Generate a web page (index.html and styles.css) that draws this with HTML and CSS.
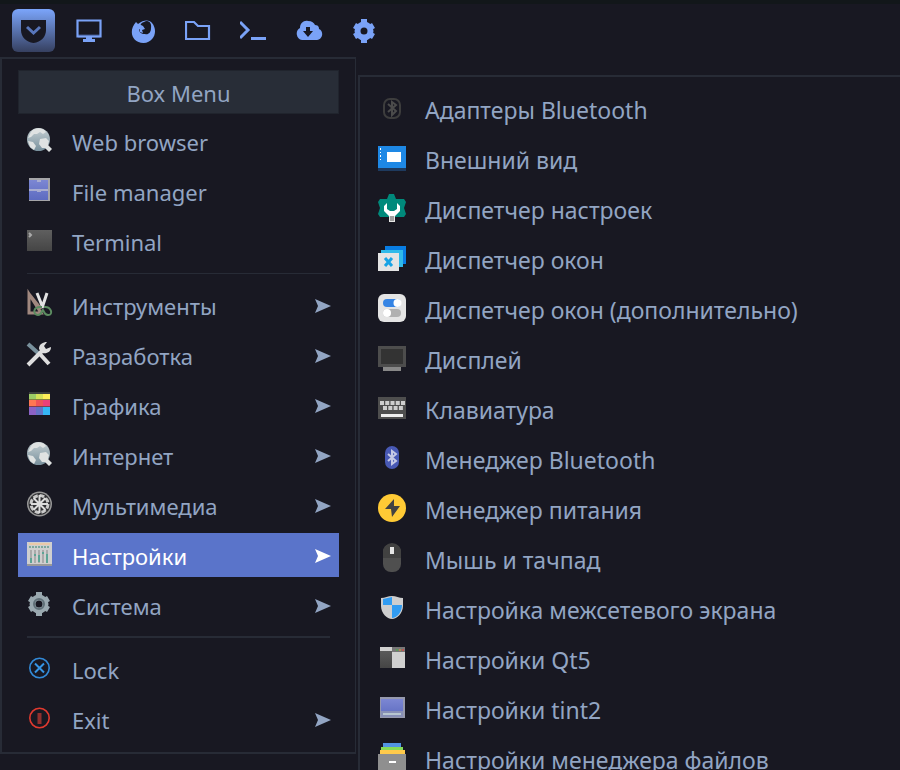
FILE: index.html
```html
<!DOCTYPE html>
<html lang="ru">
<head>
<meta charset="utf-8">
<title>Box Menu</title>
<link rel="stylesheet" href="styles.css">
</head>
<body>
<svg class="defs" aria-hidden="true">
  <defs>
    <linearGradient id="launch" x1="0" y1="0" x2="0" y2="1"><stop offset="0" stop-color="#7ba5fb"/><stop offset="1" stop-color="#364060"/></linearGradient>
    <linearGradient id="dark" x1="0" y1="0" x2="0" y2="1"><stop offset="0" stop-color="#5f5f5f"/><stop offset="1" stop-color="#454545"/></linearGradient>
    <linearGradient id="violet" x1="0" y1="0" x2="0" y2="1"><stop offset="0" stop-color="#7c87d3"/><stop offset="1" stop-color="#5d6bc0"/></linearGradient>
    <linearGradient id="globe" x1="0" y1="0" x2="0" y2="1"><stop offset="0" stop-color="#c5cfd3"/><stop offset="1" stop-color="#78909c"/></linearGradient>
    <symbol id="arrow" viewBox="0 0 16 14"><path d="M0 0 16 7 0 14 3 7Z" fill="currentColor"/></symbol>
    <symbol id="i-globe" viewBox="0 0 28 28">
      <circle cx="13.500" cy="13.500" r="11.500" fill="url(#globe)"/>
      <path d="M6 6C9 1 18 1 21 6L18 8 15 6 12 8 9 8 6 11 3 12ZM3 15 8 16 11 20 9 24 5 21ZM15 13 21 12 24 15 23 19 27 23 24 26 20 22 17 22 14 18Z" fill="#dfe2e2"/>
    </symbol>
    <symbol id="i-gear" viewBox="0 0 28 28">
      <circle cx="14" cy="14" r="6.500" fill="none" stroke="currentColor" stroke-width="6"/>
      <path d="M14 7V2M14 21v5M8 10.500 4.500 8.500M20 17.500l3.500 2M8 17.500l-3.500 2M20 10.500l3.500-2" fill="none" stroke="currentColor" stroke-width="6"/>
    </symbol>
  </defs>
</svg>
<div class="desktop">
  <nav class="panel" aria-label="Панель">
    <button class="launcher" type="button" aria-label="Box Menu"><svg viewBox="0 0 43 43"><rect width="43" height="43" rx="6" fill="url(#launch)"/><path d="M9 11h25v10c0 7-5 12-12.500 13C14 33 9 28 9 21Z" fill="#181822"/><path d="M15 18l6.500 6 6.500-6" fill="none" stroke="#5876bb" stroke-width="3"/></svg></button>
    <button class="tool" type="button" aria-label="Desktop"><svg viewBox="0 0 28 28"><path d="M3 19h22" stroke="#3f5384" stroke-width="3"/><path d="M2.500 3.500h23v16h-23Z" fill="none" stroke="currentColor" stroke-width="2.200"/><path d="M11 20h6v2h3v3H8v-3h3Z" fill="currentColor"/></svg></button>
    <button class="tool" type="button" aria-label="Browser"><svg viewBox="0 0 28 28"><path d="M6 5 8 7C14 2 20 3 22 6 28 13 25 25 13.500 26 2 26-2 14 6 5Z" fill="currentColor"/><path d="M14 5c5-3 8 2 7 6 0 5-3 7-6 6-4 0-6-2-6-5l3 1c-3-3-2-7 2-8Z" fill="#181822"/><path d="M9 7l4 2 2 3-3 1 1 3-3-1Z" fill="currentColor"/></svg></button>
    <button class="tool" type="button" aria-label="Files"><svg viewBox="0 0 28 28"><path d="M1 5h8l4 4h11v13H1Z" fill="none" stroke="currentColor" stroke-width="2.200"/></svg></button>
    <button class="tool" type="button" aria-label="Terminal"><svg viewBox="0 0 28 28"><path d="M0 5l8 8-8 8" fill="none" stroke="currentColor" stroke-width="3"/><path d="M11 20h15v3H11Z" fill="currentColor"/></svg></button>
    <button class="tool" type="button" aria-label="Updates"><svg viewBox="0 0 28 28"><path d="M7 23a6.500 6.500 0 0 1-2-12C5 6 9 3 13 4c4 0 6 2 7 4 4 0 4 3 4 4 5 2 4 10-2 11Z" fill="currentColor"/><path d="M11 10h4v4h3l-5 6-5-6h3Z" fill="#181822"/></svg></button>
    <button class="tool" type="button" aria-label="Settings"><svg viewBox="0 0 28 28"><use href="#i-gear" width="28" height="28"/></svg></button>
  </nav>
  <main class="menus">
    <section class="menu menu-main">
      <h1 class="title">Box Menu</h1>
      <ul class="list">
        <li><button class="item" type="button"><svg class="icon"><use href="#i-globe"/></svg><span class="label">Web browser</span></button></li>
        <li><button class="item" type="button"><svg class="icon" viewBox="0 0 28 28"><path d="M4 2h21v23H4Z" fill="#a5a5a8"/><path d="M4 4h19v20H4Z" fill="url(#violet)"/><path d="M4 13h19v2H4ZM12 4h4v2h-4ZM12 15h4v1h-4Z" fill="#a9add0"/></svg><span class="label">File manager</span></button></li>
        <li><button class="item" type="button"><svg class="icon" viewBox="0 0 28 28"><path d="M2 4h25v21H2Z" fill="url(#dark)"/><path d="M4 7l2 2-2 2" fill="none" stroke="#aaa" stroke-width="2"/></svg><span class="label">Terminal</span></button></li>
        <li class="rule" role="separator"></li>
        <li><button class="item" type="button"><svg class="icon" viewBox="0 0 28 28"><path d="M4 4v19h12ZM4 4l12 15" fill="none" stroke="#a1887f" stroke-width="3"/><path d="M12 3l6 15M22 3l-5 15" fill="none" stroke="#e2e2e2" stroke-width="3"/><path d="M17 17c-10-1-9 8-4 8 4 0 4-6 5-5s1 5 5 5c6 0 3-9-4-8" fill="none" stroke="#5c8c61" stroke-width="2"/></svg><span class="label">Инструменты</span><svg class="arrow"><use href="#arrow"/></svg></button></li>
        <li><button class="item" type="button"><svg class="icon" viewBox="0 0 28 28"><path d="M3 4l10 9" fill="none" stroke="#78909c" stroke-width="4"/><path d="M14 13l10 11M3 25l14-14" fill="none" stroke="#dedede" stroke-width="4"/><path d="M22 2l-3 4 2 3 5-2c0 5-4 7-9 6l-3-4c0-5 4-7 8-7Z" fill="#dedede"/></svg><span class="label">Разработка</span><svg class="arrow"><use href="#arrow"/></svg></button></li>
        <li><button class="item" type="button"><svg class="icon" viewBox="0 0 28 28"><path d="M4 2h21v2H4Z" fill="#3c3f3c"/><path d="M4 9h21v2H4Z" fill="#85823f"/><path d="M4 16h21v2H4Z" fill="#80404e"/><path d="M4 4h7v5H4Z" fill="#9ccc65"/><path d="M11 4h7v5h-7Z" fill="#d4e157"/><path d="M18 4h7v5h-7Z" fill="#ffee58"/><path d="M4 10h7v6H4Z" fill="#ff7752"/><path d="M11 10h7v6h-7Z" fill="#ef5358"/><path d="M18 10h7v6h-7Z" fill="#ec407a"/><path d="M4 17h7v8H4Z" fill="#8b62c5"/><path d="M11 17h7v8h-7Z" fill="#6374c6"/><path d="M18 17h7v8h-7Z" fill="#35b6f6"/></svg><span class="label">Графика</span><svg class="arrow"><use href="#arrow"/></svg></button></li>
        <li><button class="item" type="button"><svg class="icon"><use href="#i-globe"/></svg><span class="label">Интернет</span><svg class="arrow"><use href="#arrow"/></svg></button></li>
        <li><button class="item" type="button"><svg class="icon" viewBox="0 0 28 28"><circle cx="14.500" cy="14" r="12.500" fill="#999"/><circle cx="14.500" cy="14" r="11" fill="#303033"/><circle cx="14.500" cy="14" r="8.500" fill="none" stroke="#c9c9c9" stroke-width="3" stroke-dasharray="4.670 2"/><path d="M14.500 5v18M6 14h17M8.500 8l12 12M20.500 8l-12 12" stroke="#ddd" stroke-width="2"/></svg><span class="label">Мультимедиа</span><svg class="arrow"><use href="#arrow"/></svg></button></li>
        <li><button class="item is-active" type="button" aria-expanded="true"><svg class="icon" viewBox="0 0 28 28"><path d="M2 2h25v24H2Z" fill="#999"/><path d="M2 2h25v22H2Z" fill="#cfcfcf"/><path d="M4 3h21v2H4Z" fill="#eac9a8"/><path d="M4 7h21" stroke="#7da99e" stroke-width="2" stroke-dasharray="2 1"/><path d="M6 10v13M10 10v13M14 10v13M18 10v13M22 10v13" stroke="#aaa" stroke-width="2"/><path d="M6 18v5M10 14v2M14 15v7M18 12v2M22 14v9" stroke="#5da495" stroke-width="2"/></svg><span class="label">Настройки</span><svg class="arrow"><use href="#arrow"/></svg></button></li>
        <li><button class="item" type="button"><svg class="icon system" viewBox="0 0 28 28"><use href="#i-gear" width="28" height="28"/><circle cx="14" cy="14" r="5" fill="none" stroke="#607078" stroke-width="2"/></svg><span class="label">Система</span><svg class="arrow"><use href="#arrow"/></svg></button></li>
        <li class="rule rule-bold" role="separator"></li>
        <li><button class="item" type="button"><svg class="icon" viewBox="0 0 28 28"><circle cx="14.500" cy="14" r="9.700" fill="none" stroke="#3289d6" stroke-width="1.600"/><path d="M10 9.500l9 9M19 9.500l-9 9" stroke="#3695e5" stroke-width="2"/></svg><span class="label">Lock</span></button></li>
        <li><button class="item" type="button"><svg class="icon" viewBox="0 0 28 28"><circle cx="14.500" cy="14" r="9.700" fill="none" stroke="#e0392f" stroke-width="1.600"/><path d="M12.500 9h4v11h-4Z" fill="#90302e"/></svg><span class="label">Exit</span><svg class="arrow"><use href="#arrow"/></svg></button></li>
      </ul>
    </section>
    <section class="menu menu-sub" aria-label="Настройки">
      <ul class="list">
        <li><button class="item" type="button"><svg class="icon" viewBox="0 0 28 28"><rect x="6" y="5" width="16" height="19" rx="6" fill="none" stroke="#3d3d3d" stroke-width="2"/><path d="M10 10l8 7-4 4V8l4 3-8 7" fill="none" stroke="#4b4b4b" stroke-width="2"/></svg><span class="label">Адаптеры Bluetooth</span></button></li>
        <li><button class="item" type="button"><svg class="icon" viewBox="0 0 28 28"><path d="M0 4h28v23H0Z" fill="#1e3a5e"/><path d="M0 2h28v22H0Z" fill="#1e88e5"/><path d="M9 8h14v10H9ZM2 4h1v2H2ZM2 8h1v1H2ZM2 11h1v2H2ZM2 15h1v1H2Z" fill="#fff"/></svg><span class="label">Внешний вид</span></button></li>
        <li><button class="item" type="button"><svg class="icon" viewBox="0 0 28 28"><path d="M11 0h5l2 5 8 0 2 3-2 6 2 6-2 3H2l-2-3 2-6-2-6 2-3 7 0Z" fill="#00897b"/><path d="M9 9v6l3 2h4l3-2V9l3 3v5l-5 5v2h-6v-2l-5-5v-5Z" fill="#fff"/><path d="M11 22h6v6h-6Z" fill="#e6e6e6"/><path d="M12 22h4v5h-4Z" fill="#9e9e9e"/></svg><span class="label">Диспетчер настроек</span></button></li>
        <li><button class="item" type="button"><svg class="icon" viewBox="0 0 28 28"><path d="M7 2h21v18H7Z" fill="#087de3"/><path d="M3 6h22v17H3Z" fill="#30baea"/><path d="M0 9h21v18H0Z" fill="#e4e4e4"/><path d="M7 14l7 8M14 14l-7 8" stroke="#18a3e5" stroke-width="3"/></svg><span class="label">Диспетчер окон</span></button></li>
        <li><button class="item" type="button"><svg class="icon" viewBox="0 0 28 28"><rect width="28" height="28" rx="6" fill="#e4e4e4"/><rect x="5" y="5" width="18" height="8" rx="4" fill="#3584e4"/><circle cx="19.500" cy="9" r="4" fill="#fff"/><rect x="5" y="15" width="18" height="8" rx="4" fill="#b0b0b0"/><circle cx="9" cy="19" r="4" fill="#fff"/></svg><span class="label">Диспетчер окон (дополнительно)</span></button></li>
        <li><button class="item" type="button"><svg class="icon" viewBox="0 0 28 28"><path d="M0 2h28v21H0Z" fill="#4d4d4d"/><path d="M3 5h22v15H3Z" fill="#333"/><path d="M5 23h18v4H5Z" fill="#888"/></svg><span class="label">Дисплей</span></button></li>
        <li><button class="item" type="button"><svg class="icon" viewBox="0 0 28 28"><path d="M0 3h28v22H0Z" fill="#4e4e4e"/><path d="M2 9h25" stroke="#cecece" stroke-width="4" stroke-dasharray="4 1.250"/><path d="M5 14h20" stroke="#cecece" stroke-width="4" stroke-dasharray="4 1.300"/><path d="M3 20h22v3H3Z" fill="#eee"/></svg><span class="label">Клавиатура</span></button></li>
        <li><button class="item" type="button"><svg class="icon" viewBox="0 0 28 28"><rect x="7" y="2" width="14" height="23" rx="7" fill="#4859b5"/><path d="M10 10l8 7-4 3V7l4 3-8 7" fill="none" stroke="#c5c9e5" stroke-width="2"/></svg><span class="label">Менеджер Bluetooth</span></button></li>
        <li><button class="item" type="button"><svg class="icon" viewBox="0 0 28 28"><circle cx="14" cy="14" r="14" fill="#ffca35"/><path d="M16 5 7 15h6l1 8 8-11h-6Z" fill="#424242"/></svg><span class="label">Менеджер питания</span></button></li>
        <li><button class="item" type="button"><svg class="icon" viewBox="0 0 28 28"><rect x="5" width="18" height="28" rx="8" fill="#4f4f4f"/><path d="M5 14V8a8 8 0 0 1 18 0v6Z" fill="#414141"/><path d="M12 3h4v7h-4Z" fill="#e6e6e6"/></svg><span class="label">Мышь и тачпад</span></button></li>
        <li><button class="item" type="button"><svg class="icon" viewBox="0 0 28 28"><path d="M3 4c4 0 7-2 11-2s7 2 11 2v8c0 7-6 13-11 13S3 19 3 12Z" fill="#cecece"/><path d="M5 5l9-2v8H5ZM14 11h10c0 7-5 13-10 13Z" fill="#319cf2"/></svg><span class="label">Настройка межсетевого экрана</span></button></li>
        <li><button class="item" type="button"><svg class="icon" viewBox="0 0 28 28"><path d="M2 3h25v21H2Z" fill="url(#dark)"/><path d="M14 8h13v16H14ZM2 3h12v4H2Z" fill="#d0d0d0"/><path d="M14 3h13v5H14Z" fill="#777"/><path d="M18 5h2v2h-2Z" fill="#5b9959"/><path d="M21 5h2v2h-2Z" fill="#b28c48"/><path d="M24 5h2v2h-2Z" fill="#b55"/></svg><span class="label">Настройки Qt5</span></button></li>
        <li><button class="item" type="button"><svg class="icon" viewBox="0 0 28 28"><path d="M2 3h25v21H2Z" fill="#9699ad"/><path d="M3 5h22v18H3Z" fill="url(#violet)"/><path d="M3 17h22v6H3Z" fill="#8890b6"/><path d="M5 19h18v2H5Z" fill="#b8c6d0"/></svg><span class="label">Настройки tint2</span></button></li>
        <li><button class="item" type="button"><svg class="icon" viewBox="0 0 28 28"><path d="M5-1h18v4H5Z" fill="#5294e2"/><path d="M3 3h22v4H3Z" fill="#86db57"/><path d="M2 6h25v5H2Z" fill="#ffca4b"/><path d="M0 10h28v18H0Z" fill="#8f8f8f"/><path d="M11 17h7v2h-7Z" fill="#fff"/></svg><span class="label">Настройки менеджера файлов</span></button></li>
      </ul>
    </section>
  </main>
</div>
</body>
</html>
```
FILE: styles.css
```css
* { box-sizing: border-box; }

body {
  margin: 0;
  background: #181822;
  color: #92a5c3;
  font: 22px/32px "Noto Sans", sans-serif;
}

.defs { position: absolute; width: 0; height: 0; }

.desktop {
  display: flex;
  flex-direction: column;
  height: 100vh;
  overflow: hidden;
}

button {
  border: 0;
  padding: 0;
  background: none;
  color: inherit;
  font: inherit;
  text-align: left;
}

svg { display: block; }

.panel {
  display: flex;
  align-items: center;
  gap: 27px;
  height: 57px;
  flex: none;
  padding: 0 12px;
  border-top: 4px solid #12171a;
  color: #7aa2f7;
}

.launcher { width: 43px; height: 43px; margin-right: -7px; }
.launcher svg { width: 100%; }
.tool { width: 28px; height: 28px; }

.menus {
  display: grid;
  grid-template-columns: 356px 1fr;
  column-gap: 2px;
  align-items: start;
}

.menu { border: 2px solid #272b36; }

.menu-main {
  padding: 11px 16px;
  border-right-width: 1px;
}

.menu-sub {
  margin-top: 18px;
  padding: 11px;
  border-right: 0;
  font-size: 23px;
}

.title {
  margin: 0 0 5px;
  padding-top: 2px;
  border: 1px solid #20242d;
  background: #282d37;
  font-size: inherit;
  font-weight: normal;
  line-height: 40px;
  text-align: center;
}

.list {
  display: flex;
  flex-direction: column;
  gap: 6px;
  margin: 0;
  padding: 0;
  list-style: none;
}

.item {
  display: flex;
  width: 100%;
  padding: 6px 7px;
  white-space: nowrap;
}

.menu-main .item { padding: 7px 7px 5px; }

.item.is-active { background: #5a74ca; color: #fff; }

.icon {
  flex: none;
  width: 28px;
  height: 28px;
  margin-right: 19px;
  overflow: visible;
}

.system { color: #9aa9b0; }

.arrow {
  width: 16px;
  height: 14px;
  margin: 9px 1px 0 auto;
}

.rule {
  height: 8px;
  margin: 0 9px;
  padding: 4px 0 3px;
  background: #272b36 content-box;
}

.rule-bold { padding: 3px 0; }
```
